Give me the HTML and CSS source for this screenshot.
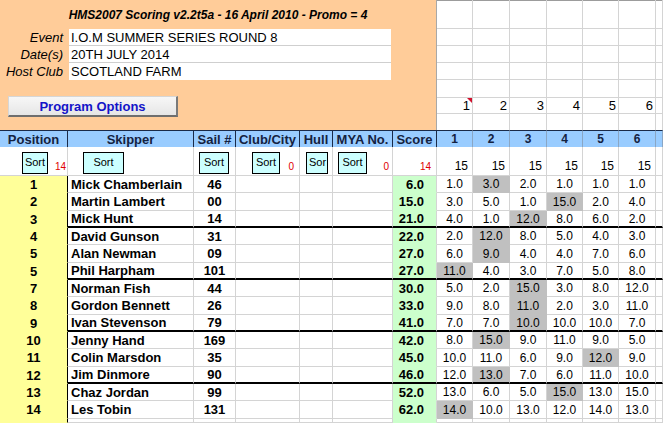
FILE: index.html
```html
<!DOCTYPE html>
<html>
<head>
<meta charset="utf-8">
<link rel="stylesheet" href="styles.css">
</head>
<body>
<div class="top">
  <div class="panel">
    <div class="title">HMS2007 Scoring v2.2t5a - 16 April 2010 - Promo = 4</div>
    <div class="info">
      <div class="labels"><div>Event</div><div>Date(s)</div><div>Host Club</div></div>
      <div class="box"><div>I.O.M SUMMER SERIES ROUND 8</div><div>20TH JULY 2014</div><div>SCOTLAND FARM</div></div>
    </div>
    <div class="btn">Program Options</div>
  </div>
  <div class="rgrid">
    <div class="g"></div><div class="g"></div><div class="g"></div><div class="g"></div><div class="g"></div><div class="g"></div><div class="g"></div>
    <div class="g"></div><div class="g"></div><div class="g"></div><div class="g"></div><div class="g"></div><div class="g"></div><div class="g"></div>
    <div class="g"></div><div class="g"></div><div class="g"></div><div class="g"></div><div class="g"></div><div class="g"></div><div class="g"></div>
    <div class="g"></div><div class="g"></div><div class="g"></div><div class="g"></div><div class="g"></div><div class="g"></div><div class="g"></div>
    <div class="g"></div><div class="g"></div><div class="g"></div><div class="g"></div><div class="g"></div><div class="g"></div><div class="g"></div>
    <div class="g num note">1</div><div class="g num">2</div><div class="g num">3</div><div class="g num">4</div><div class="g num">5</div><div class="g num">6</div><div class="g"></div>
    <div class="g last"></div><div class="g last"></div><div class="g last"></div><div class="g last"></div><div class="g last"></div><div class="g last"></div><div class="g last"></div>
  </div>
</div>
<div class="sheet">
  <div class="h">Position</div><div class="h">Skipper</div><div class="h">Sail #</div><div class="h">Club/City</div><div class="h">Hull</div><div class="h">MYA No.</div><div class="h">Score</div>
  <div class="h r">1</div><div class="h r">2</div><div class="h r">3</div><div class="h r">4</div><div class="h r">5</div><div class="h r">6</div><div class="h r"></div>

  <div class="s"><div class="sb b-pos">Sort</div><span class="red red-pos">14</span></div>
  <div class="s"><div class="sb b-skip">Sort</div></div>
  <div class="s"><div class="sb b-sail">Sort</div></div>
  <div class="s"><div class="sb b-club">Sort</div><span class="red red-club">0</span></div>
  <div class="s"><div class="sb b-hull">Sor</div></div>
  <div class="s"><div class="sb b-mya">Sort</div><span class="red red-mya">0</span></div>
  <div class="s"><span class="red red-score">14</span></div>
  <div class="s q">15</div><div class="s q">15</div><div class="s q">15</div><div class="s q">15</div><div class="s q">15</div><div class="s q">15</div><div class="s"></div>

  <div class="row"><div class="c p">1</div><div class="c n">Mick Chamberlain</div><div class="c sn">46</div><div class="c"></div><div class="c"></div><div class="c"></div><div class="c sc">6.0</div><div class="c r">1.0</div><div class="c r d">3.0</div><div class="c r">2.0</div><div class="c r">1.0</div><div class="c r">1.0</div><div class="c r">1.0</div><div class="c"></div></div>
  <div class="row"><div class="c p">2</div><div class="c n">Martin Lambert</div><div class="c sn">00</div><div class="c"></div><div class="c"></div><div class="c"></div><div class="c sc">15.0</div><div class="c r">3.0</div><div class="c r">5.0</div><div class="c r">1.0</div><div class="c r d">15.0</div><div class="c r">2.0</div><div class="c r">4.0</div><div class="c"></div></div>
  <div class="row t"><div class="c p">3</div><div class="c n">Mick Hunt</div><div class="c sn">14</div><div class="c"></div><div class="c"></div><div class="c"></div><div class="c sc">21.0</div><div class="c r">4.0</div><div class="c r">1.0</div><div class="c r d">12.0</div><div class="c r">8.0</div><div class="c r">6.0</div><div class="c r">2.0</div><div class="c"></div></div>
  <div class="row"><div class="c p">4</div><div class="c n">David Gunson</div><div class="c sn">31</div><div class="c"></div><div class="c"></div><div class="c"></div><div class="c sc">22.0</div><div class="c r">2.0</div><div class="c r d">12.0</div><div class="c r">8.0</div><div class="c r">5.0</div><div class="c r">4.0</div><div class="c r">3.0</div><div class="c"></div></div>
  <div class="row"><div class="c p">5</div><div class="c n">Alan Newman</div><div class="c sn">09</div><div class="c"></div><div class="c"></div><div class="c"></div><div class="c sc">27.0</div><div class="c r">6.0</div><div class="c r d">9.0</div><div class="c r">4.0</div><div class="c r">4.0</div><div class="c r">7.0</div><div class="c r">6.0</div><div class="c"></div></div>
  <div class="row t"><div class="c p">5</div><div class="c n">Phil Harpham</div><div class="c sn">101</div><div class="c"></div><div class="c"></div><div class="c"></div><div class="c sc">27.0</div><div class="c r d">11.0</div><div class="c r">4.0</div><div class="c r">3.0</div><div class="c r">7.0</div><div class="c r">5.0</div><div class="c r">8.0</div><div class="c"></div></div>
  <div class="row"><div class="c p">7</div><div class="c n">Norman Fish</div><div class="c sn">44</div><div class="c"></div><div class="c"></div><div class="c"></div><div class="c sc">30.0</div><div class="c r">5.0</div><div class="c r">2.0</div><div class="c r d">15.0</div><div class="c r">3.0</div><div class="c r">8.0</div><div class="c r">12.0</div><div class="c"></div></div>
  <div class="row"><div class="c p">8</div><div class="c n">Gordon Bennett</div><div class="c sn">26</div><div class="c"></div><div class="c"></div><div class="c"></div><div class="c sc">33.0</div><div class="c r">9.0</div><div class="c r">8.0</div><div class="c r d">11.0</div><div class="c r">2.0</div><div class="c r">3.0</div><div class="c r">11.0</div><div class="c"></div></div>
  <div class="row t"><div class="c p">9</div><div class="c n">Ivan Stevenson</div><div class="c sn">79</div><div class="c"></div><div class="c"></div><div class="c"></div><div class="c sc">41.0</div><div class="c r">7.0</div><div class="c r">7.0</div><div class="c r d">10.0</div><div class="c r">10.0</div><div class="c r">10.0</div><div class="c r">7.0</div><div class="c"></div></div>
  <div class="row"><div class="c p">10</div><div class="c n">Jenny Hand</div><div class="c sn">169</div><div class="c"></div><div class="c"></div><div class="c"></div><div class="c sc">42.0</div><div class="c r">8.0</div><div class="c r d">15.0</div><div class="c r">9.0</div><div class="c r">11.0</div><div class="c r">9.0</div><div class="c r">5.0</div><div class="c"></div></div>
  <div class="row"><div class="c p">11</div><div class="c n">Colin Marsdon</div><div class="c sn">35</div><div class="c"></div><div class="c"></div><div class="c"></div><div class="c sc">45.0</div><div class="c r">10.0</div><div class="c r">11.0</div><div class="c r">6.0</div><div class="c r">9.0</div><div class="c r d">12.0</div><div class="c r">9.0</div><div class="c"></div></div>
  <div class="row t"><div class="c p">12</div><div class="c n">Jim Dinmore</div><div class="c sn">90</div><div class="c"></div><div class="c"></div><div class="c"></div><div class="c sc">46.0</div><div class="c r">12.0</div><div class="c r d">13.0</div><div class="c r">7.0</div><div class="c r">6.0</div><div class="c r">11.0</div><div class="c r">10.0</div><div class="c"></div></div>
  <div class="row"><div class="c p">13</div><div class="c n">Chaz Jordan</div><div class="c sn">99</div><div class="c"></div><div class="c"></div><div class="c"></div><div class="c sc">52.0</div><div class="c r">13.0</div><div class="c r">6.0</div><div class="c r">5.0</div><div class="c r d">15.0</div><div class="c r">13.0</div><div class="c r">15.0</div><div class="c"></div></div>
  <div class="row"><div class="c p">14</div><div class="c n">Les Tobin</div><div class="c sn">131</div><div class="c"></div><div class="c"></div><div class="c"></div><div class="c sc">62.0</div><div class="c r d">14.0</div><div class="c r">10.0</div><div class="c r">13.0</div><div class="c r">12.0</div><div class="c r">14.0</div><div class="c r">13.0</div><div class="c"></div></div>
  <div class="row"><div class="c p"></div><div class="c"></div><div class="c"></div><div class="c"></div><div class="c"></div><div class="c"></div><div class="c sc"></div><div class="c"></div><div class="c"></div><div class="c"></div><div class="c"></div><div class="c"></div><div class="c"></div><div class="c"></div></div>
</div>
</body>
</html>
```
FILE: styles.css
```css
html, body {
  margin: 0;
  padding: 0;
}
body {
  width: 663px;
  height: 423px;
  overflow: hidden;
  background: #ffffff;
  font-family: "Liberation Sans", Arial, sans-serif;
  color: #000000;
}

/* ---------- top section ---------- */
.top {
  display: flex;
  height: 130px;
}
.panel {
  width: 437px;
  flex: none;
  box-sizing: border-box;
  background: #ffcc99;
  border-right: 1px solid #a8a8a8;
}
.title {
  height: 29px;
  display: flex;
  align-items: center;
  justify-content: center;
  font-size: 12px;
  font-weight: bold;
  font-style: italic;
}
.info {
  display: flex;
}
.labels {
  width: 63px;
  margin-right: 6px;
  text-align: right;
  font-size: 13px;
  font-style: italic;
}
.labels div,
.box div {
  height: 17px;
  line-height: 17px;
  box-sizing: border-box;
  white-space: nowrap;
}
.box {
  width: 322px;
  background: #ffffff;
  font-size: 13px;
}
.box div {
  padding-left: 2px;
  border-bottom: 1px solid #cfcfcf;
}
.box div:last-child {
  border-bottom: none;
}
.btn {
  margin: 16px 0 0 8px;
  width: 170px;
  height: 21px;
  box-sizing: border-box;
  background: linear-gradient(#f7f7f7, #e6e6e6);
  border-top: 1px solid #d6d6d6;
  border-left: 1px solid #d6d6d6;
  border-right: 2px solid #7a7a7a;
  border-bottom: 2px solid #6e6e6e;
  color: #1414c8;
  font-size: 13px;
  font-weight: bold;
  display: flex;
  align-items: center;
  justify-content: center;
}

.rgrid {
  flex: 1;
  display: grid;
  grid-template-columns: 36px 37px 37px 36px 36px 37px 1fr;
  grid-template-rows: 29px 17px 17px 17px 18px 16px 16px;
  background: linear-gradient(#9c9c9c, #9c9c9c) top left / 100% 1px no-repeat;
}
.g {
  box-sizing: border-box;
  border-right: 1px solid #d4d4d4;
  border-bottom: 1px solid #d4d4d4;
}
.g.last {
  border-bottom: none;
}
.num {
  display: flex;
  align-items: center;
  justify-content: flex-end;
  padding-right: 2px;
  font-size: 13px;
}
.note {
  position: relative;
}
.note::after {
  content: "";
  position: absolute;
  top: 0;
  right: 0;
  width: 0;
  height: 0;
  border-top: 5px solid #d0102c;
  border-left: 5px solid transparent;
}

/* ---------- sheet ---------- */
.sheet {
  display: grid;
  grid-template-columns: 68px 126px 42px 64px 33px 60px 44px 36px 37px 37px 36px 36px 37px 1fr;
  grid-template-rows: 17px 29px 17px 18px 17px 17px 18px 17px 17px 18px 17px 17px 18px 17px 17px 18px 1fr;
  height: 293px;
}
.row {
  display: contents;
}

.h {
  box-sizing: border-box;
  background: #99ccff;
  border-top: 1px solid #1a2a48;
  border-right: 1px solid #1a2a48;
  color: #14223f;
  font-size: 13px;
  font-weight: bold;
  display: flex;
  align-items: center;
  justify-content: center;
  white-space: nowrap;
}
.h.r {
  border-right-color: #8aa6c4;
}

.s {
  box-sizing: border-box;
  border-right: 1px solid #d4d4d4;
  border-bottom: 1px solid #d4d4d4;
  display: flex;
  align-items: flex-start;
}
.sb {
  margin-top: 5px;
  height: 22px;
  box-sizing: border-box;
  border: 1px solid #000000;
  background: #ccffff;
  font-size: 11px;
  display: flex;
  align-items: center;
  justify-content: center;
  padding-bottom: 2px;
  overflow: hidden;
  white-space: nowrap;
  flex: none;
}
.b-pos { margin-left: 22px; width: 26px; }
.b-skip { margin-left: 15px; width: 41px; }
.b-sail { margin-left: 5px; width: 30px; }
.b-club { margin-left: 16px; width: 28px; }
.b-hull { margin-left: 6px; width: 22px; justify-content: flex-start; padding-left: 2px; }
.b-mya { margin-left: 5px; width: 29px; }
.red {
  margin-left: auto;
  align-self: flex-end;
  color: #e00000;
  font-size: 10px;
  line-height: 12px;
  padding-bottom: 2px;
}
.red-pos { padding-right: 1px; }
.red-club { padding-right: 5px; }
.red-mya { padding-right: 3px; }
.red-score { padding-right: 5px; }
.q {
  align-items: flex-end;
  justify-content: flex-end;
  padding: 0 4px 2px 0;
  font-size: 12px;
  line-height: 14px;
}

.c {
  box-sizing: border-box;
  border-right: 1px solid #d4d4d4;
  border-bottom: 1px solid #d4d4d4;
  display: flex;
  align-items: center;
  font-size: 13px;
  white-space: nowrap;
}
.p {
  background: #ffff99;
  border-right-color: #000000;
  border-bottom-color: #ffff99;
  font-weight: bold;
  justify-content: center;
}
.n {
  font-weight: bold;
  padding-left: 3px;
}
.sn {
  font-weight: bold;
  justify-content: center;
}
.sc {
  background: #ccffcc;
  border-bottom-color: #ccffcc;
  font-weight: bold;
  justify-content: flex-end;
  padding-right: 12px;
}
.r {
  font-size: 12px;
  justify-content: center;
}
.d {
  background: #c0c0c0;
  border-bottom-color: #c0c0c0;
  border-right-color: #c0c0c0;
}
.t > .c:not(.p) {
  border-bottom: 2px solid #000000;
}
```
